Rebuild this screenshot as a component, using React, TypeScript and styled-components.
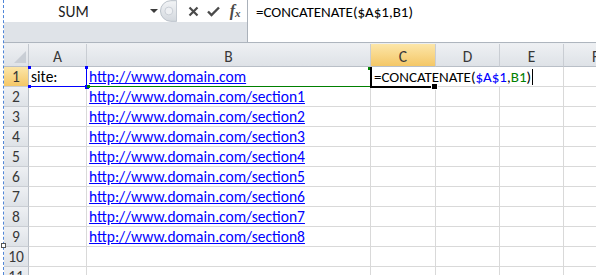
import styled, { createGlobalStyle } from "styled-components";

const FONT = `"Carlito", "Lato", "Liberation Sans", sans-serif`;

const GlobalStyle = createGlobalStyle`
	html, body {
		margin: 0;
		padding: 0;
		background: #ffffff;
		overflow: hidden;
	}
	body {
		font-family: ${FONT};
	}
`;

const urls = [
	"http://www.domain.com/section1",
	"http://www.domain.com/section2",
	"http://www.domain.com/section3",
	"http://www.domain.com/section4",
	"http://www.domain.com/section5",
	"http://www.domain.com/section6",
	"http://www.domain.com/section7",
	"http://www.domain.com/section8",
	"",
	"",
];

const columns = ["A", "B", "C", "D", "E", "F"];

/**
 * Excel 2010 style sheet with a CONCATENATE formula being edited in C1
 */
const App = () => {
	return (
		<>
			<GlobalStyle />
			<Window>
				<Sheet>
					<FormulaBar>
						<LeftPane>
							<TopStrip>
								<NameBox>
									<NameText>SUM</NameText>
									<DropArrow />
								</NameBox>
								<Splitter width="17" height="22" viewBox="0 0 17 22">
									<defs>
										<linearGradient id="spl" x1="0" y1="0" x2="0" y2="1">
											<stop offset="0" stopColor="#f2f4f6" />
											<stop offset="1" stopColor="#d3d8de" />
										</linearGradient>
									</defs>
									<path d="M17 0.5 H11 A10.5 10.5 0 0 0 11 21.5 H17 Z" fill="url(#spl)" stroke="#b9c0c8" />
									<circle cx="9" cy="11" r="4" fill="#eef0f3" stroke="#c9ced5" />
								</Splitter>
								<IconButton>
									<svg width="11" height="11" viewBox="0 0 11 11">
										<path d="M1.5 1.5 L9.5 9.5 M9.5 1.5 L1.5 9.5" stroke="#4a4a4a" strokeWidth="2.2" />
									</svg>
								</IconButton>
								<IconButton>
									<svg width="13" height="11" viewBox="0 0 13 11">
										<path d="M1 5.5 L4.5 9 L12 1.5" stroke="#4a4a4a" strokeWidth="2.4" fill="none" />
									</svg>
								</IconButton>
								<FxButton>
									f<sub>x</sub>
								</FxButton>
							</TopStrip>
							<BottomStrip />
						</LeftPane>
						<FormulaInput>=CONCATENATE($A$1,B1)</FormulaInput>
					</FormulaBar>
					<Gap />
					<Grid>
						<CornerCell>
							<svg width="12" height="12" viewBox="0 0 12 12">
								<polygon points="12,0 12,12 0,12" fill="#c9ced5" />
							</svg>
						</CornerCell>
						{columns.map((c) => (
							<ColHeader key={c} $selected={c === "C"}>
								{c}
							</ColHeader>
						))}

						{/* row 1 */}
						<RowHeader $selected>1</RowHeader>
						<Cell>
							site:
							<RefFrame $color="#0000ff" />
							<Handle $color="#0000ff" style={{ left: -1, top: -1 }} />
							<Handle $color="#0000ff" style={{ right: -2, top: -1 }} />
							<Handle $color="#0000ff" style={{ left: -1, bottom: -2 }} />
							<Handle $color="#0000ff" style={{ right: -3, bottom: -3 }} $big />
						</Cell>
						<Cell>
							<Link>http://www.domain.com</Link>
							<RefFrame $color="#008000" />
							<Handle $color="#008000" style={{ right: -1, top: 0 }} />
							<Handle $color="#008000" style={{ left: 0, bottom: -2 }} />
						</Cell>
						<Cell>
							<Editor>
								=CONCATENATE(<Ref $color="#0000ff">$A$1</Ref>,<Ref $color="#008000">B1</Ref>)
								<Caret />
							</Editor>
							<ActiveFrame />
							<FillHandle />
						</Cell>
						<Cell />
						<Cell />
						<Cell />

						{urls.map((u, i) => (
							<Row key={i} index={i + 2} url={u} />
						))}
					</Grid>
				</Sheet>
				<ObjectHandle />
			</Window>
		</>
	);
};

const Row = ({ index, url }: { index: number; url: string }) => (
	<>
		<RowHeader>{index}</RowHeader>
		<Cell />
		<Cell>{url && <Link>{url}</Link>}</Cell>
		<Cell />
		<Cell />
		<Cell />
		<Cell />
	</>
);

export default App;

const Window = styled.div`
	position: relative;
	width: 596px;
	height: 275px;
	overflow: hidden;
	padding-left: 3px;
	box-sizing: border-box;
	background: #ffffff;
`;

const Sheet = styled.div`
	height: 100%;
	border-left: 1px dashed #4f86d8;
`;

const FormulaBar = styled.div`
	display: grid;
	grid-template-columns: 244px 1fr;
	height: 43px;
	box-sizing: border-box;
	border-bottom: 1px solid #aeb5be;
`;

const LeftPane = styled.div`
	display: flex;
	flex-direction: column;
	border-right: 1px solid #aab1ba;
`;

const TopStrip = styled.div`
	display: flex;
	align-items: center;
	height: 22px;
	background: #ffffff;
`;

const BottomStrip = styled.div`
	flex: 1;
	background: #dfe3e8;
`;

const NameBox = styled.div`
	display: flex;
	align-items: center;
	width: 159px;
	height: 100%;
`;

const NameText = styled.span`
	width: 139px;
	text-align: center;
	font-size: 15.5px;
	color: #1e1e1e;
`;

const DropArrow = styled.span`
	margin-left: 7px;
	width: 0;
	height: 0;
	border-left: 4px solid transparent;
	border-right: 4px solid transparent;
	border-top: 4px solid #3c3c3c;
`;

const Splitter = styled.svg`
	display: block;
	margin-right: 7px;
`;

const IconButton = styled.div`
	display: flex;
	align-items: center;
	justify-content: center;
	width: 20px;
	height: 22px;
`;

const FxButton = styled.div`
	width: 24px;
	text-align: center;
	font-family: "Liberation Serif", serif;
	font-style: italic;
	font-weight: bold;
	font-size: 16px;
	color: #4a4a4a;

	sub {
		font-size: 11px;
		vertical-align: -1px;
	}
`;

const FormulaInput = styled.div`
	background: #ffffff;
	padding-left: 8px;
	line-height: 24px;
	font-size: 15px;
	color: #000000;
	white-space: nowrap;
`;

const Gap = styled.div`
	height: 1px;
	background: #eceff2;
`;

const Grid = styled.div`
	display: grid;
	grid-template-columns: 25px 58px 284px 65px 64px 64px 64px;
	grid-template-rows: 23px;
	grid-auto-rows: 20px;
	font-size: 15.5px;
`;

const headerBg = "linear-gradient(#eef0f3, #dee2e7)";
const selectedBg = "linear-gradient(#fce6a9, #f4c767)";

const CornerCell = styled.div`
	display: flex;
	align-items: flex-end;
	justify-content: flex-end;
	padding: 0 2px 3px 0;
	box-sizing: border-box;
	background: ${headerBg};
	border-right: 1px solid #c3c8cf;
	border-bottom: 1px solid #b9bfc7;
`;

const ColHeader = styled.div<{ $selected?: boolean }>`
	box-sizing: border-box;
	padding-top: 4px;
	text-align: center;
	line-height: 18px;
	color: #383838;
	background: ${(p) => (p.$selected ? selectedBg : headerBg)};
	border-right: 1px solid #c9cdd3;
	border-bottom: 1px solid #b9bfc7;
`;

const RowHeader = styled.div<{ $selected?: boolean }>`
	box-sizing: border-box;
	text-align: center;
	line-height: 20px;
	color: #383838;
	background: ${(p) => (p.$selected ? selectedBg : headerBg)};
	border-right: 1px solid #b9bfc7;
	border-bottom: 1px solid #c9cdd3;
`;

const Cell = styled.div`
	position: relative;
	box-sizing: border-box;
	padding-left: 2px;
	line-height: 20px;
	white-space: nowrap;
	color: #000000;
	border-right: 1px solid #d9d9d9;
	border-bottom: 1px solid #d9d9d9;
`;

const Link = styled.span`
	color: #0000ff;
	text-decoration: underline;
`;

const RefFrame = styled.div<{ $color: string }>`
	position: absolute;
	left: 0;
	top: 0;
	right: -1px;
	bottom: -1px;
	border-right: 1px solid ${(p) => p.$color};
	border-bottom: 1px solid ${(p) => p.$color};
	pointer-events: none;
	z-index: 1;
`;

const Handle = styled.div<{ $color: string; $big?: boolean }>`
	position: absolute;
	width: ${(p) => (p.$big ? 4 : 3)}px;
	height: ${(p) => (p.$big ? 4 : 3)}px;
	background: ${(p) => p.$color};
	z-index: 2;
`;

const Editor = styled.div`
	position: absolute;
	left: 0;
	top: 0;
	width: 191px;
	height: 19px;
	padding-left: 3px;
	box-sizing: border-box;
	background: #ffffff;
	font-size: 15px;
	line-height: 20px;
	z-index: 3;
`;

const Ref = styled.span<{ $color: string }>`
	color: ${(p) => p.$color};
`;

const Caret = styled.span`
	display: inline-block;
	width: 1px;
	height: 16px;
	margin-left: 1px;
	vertical-align: -3px;
	background: #000000;
`;

const ActiveFrame = styled.div`
	position: absolute;
	left: -1px;
	top: 0;
	right: 3px;
	bottom: -2px;
	border-left: 2px solid #000000;
	border-bottom: 2px solid #000000;
	z-index: 4;
`;

const FillHandle = styled.div`
	position: absolute;
	left: 61px;
	top: 17px;
	width: 5px;
	height: 5px;
	background: #000000;
	box-shadow: 0 0 0 1px #ffffff;
	z-index: 5;
`;

const ObjectHandle = styled.div`
	position: absolute;
	left: 1px;
	top: 243px;
	width: 5px;
	height: 5px;
	box-sizing: border-box;
	background: #ffffff;
	border: 1px solid #555555;
`;
